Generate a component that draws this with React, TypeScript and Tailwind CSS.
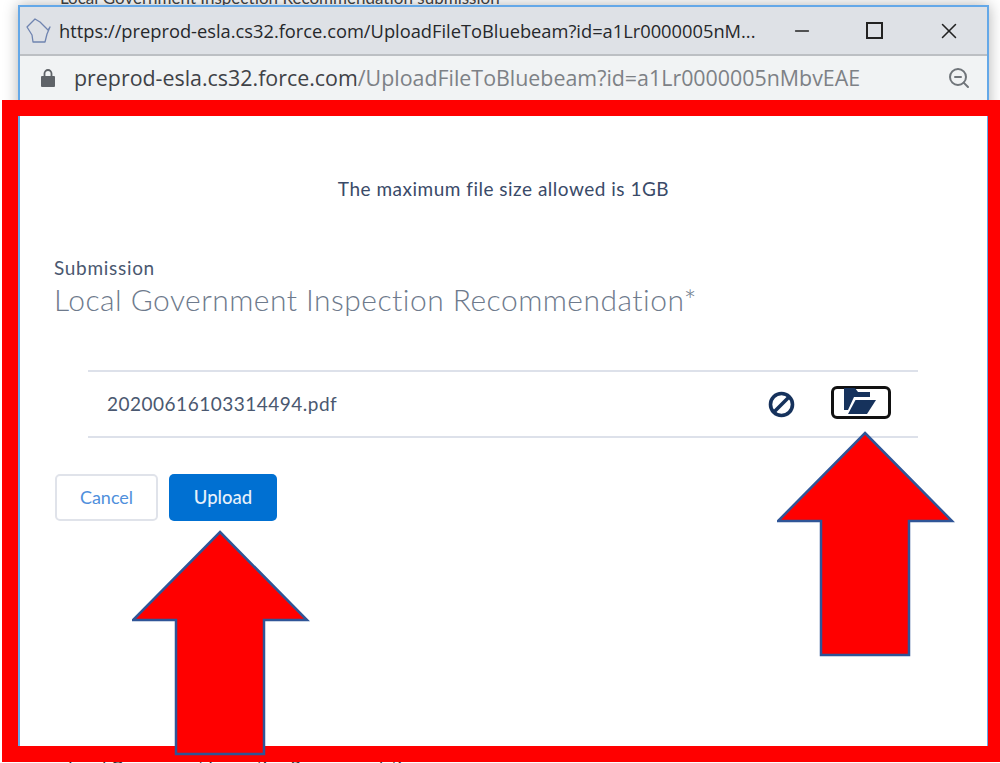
import { Minus, X, ZoomOut } from "lucide-react";

const sans = "font-['Lato','Open_Sans',sans-serif]";

function StateOutline() {
  return (
    <svg width="25" height="27" viewBox="0 0 25 27" fill="none" stroke="#6f84b0" strokeWidth="1.3" strokeLinejoin="round">
      <path d="M1 10 L9 2 L14 5 L17 8 L22 13 L24 10 L21 17 L19 25 L7 25 L6 18 Z" />
    </svg>
  );
}

function Lock() {
  return (
    <svg width="14" height="18" viewBox="0 0 14 18" fill="#5f6368">
      <path d="M1 7h12a1 1 0 0 1 1 1v9a1 1 0 0 1-1 1H1a1 1 0 0 1-1-1V8a1 1 0 0 1 1-1Z" />
      <path d="M3.5 7V4.5a3.5 3.5 0 0 1 7 0V7" fill="none" stroke="#5f6368" strokeWidth="1.8" />
    </svg>
  );
}

function BanIcon() {
  return (
    <svg width="27" height="27" viewBox="0 0 27 27" fill="none" stroke="#16325c" strokeWidth="3.6">
      <circle cx="13.5" cy="13.5" r="11" />
      <path d="M6 21 L21 6" />
    </svg>
  );
}

function FolderButton() {
  return (
    <button className="relative h-[33px] w-[60px] rounded-[6px] border-[3px] border-[#111] bg-white">
      <svg className="absolute left-[9px] top-[-3px]" width="34" height="30" viewBox="0 0 34 30" fill="#16325c">
        <path d="M1 2 H12 L15 6 H27 V11 H11 L5 24 H1 Z" />
        <path d="M12.5 14 H33 L24 28 H5 Z" />
      </svg>
    </button>
  );
}

function Arrow({ className }: { className: string }) {
  return (
    <svg className={`absolute ${className}`} width="180" height="226" viewBox="0 0 180 226">
      <path d="M88 2 L175 90 L132 90 L132 224 L44 224 L44 90 L1 90 Z" fill="#ff0000" stroke="#2f5597" strokeWidth="2.5" />
    </svg>
  );
}

export default function App() {
  return (
    <div className={`relative h-[763px] w-[1000px] overflow-hidden bg-white ${sans}`}>
      {/* page text showing round the popup */}
      <p className="absolute left-[60px] top-[-15px] text-[17px] text-[#444]">Local Government Inspection Recommendation submission</p>
      <p className="absolute left-[68px] top-[755px] text-[17px] text-[#333]">Local Government Inspection Recommendation</p>

      <div className="absolute left-[18px] top-[5px] h-[745px] w-[971px] border-2 border-[#64a8e8] bg-white shadow-[0_0_14px_rgba(0,0,0,0.3)]">
        <div className="flex h-[49px] items-center border-b-2 border-[#bcbfc3] bg-[#dee1e6] pl-[6px] font-['Open_Sans',sans-serif]">
          <StateOutline />
          <span className="ml-[8px] w-[700px] truncate text-[18.3px] text-[#26282b]">
            https://preprod-esla.cs32.force.com/UploadFileToBluebeam?id=a1Lr0000005nM...
          </span>
          <Minus className="ml-[32px] text-[#222]" size={22} strokeWidth={1.5} />
          <div className="ml-[53px] h-[17px] w-[17px] border-2 border-[#222]" />
          <X className="ml-[53px] text-[#222]" size={26} strokeWidth={1.4} />
        </div>
        <div className="flex h-[44px] items-center bg-[#f1f3f4] pl-[21px] font-['Open_Sans',sans-serif] text-[21.4px]">
          <Lock />
          <span className="ml-[19px] text-[#3f4247]">preprod-esla.cs32.force.com</span>
          <span className="text-[#7d8186]">/UploadFileToBluebeam?id=a1Lr0000005nMbvEAE</span>
          <ZoomOut className="ml-auto mr-[16px] text-[#70757a]" size={24} strokeWidth={2} />
        </div>

        <div className="flex flex-col pt-[75px]">
          <p className="text-center text-[19px] leading-[28px] tracking-[0.5px] text-[#3a4a68]">The maximum file size allowed is 1GB</p>
          <div className="mt-[53px] pl-[34px] text-[#54698d]">
            <p className="text-[19px] leading-[24px] tracking-[0.7px] text-[#4a5870]">Submission</p>
            <h2 className="mt-[1px] text-[30px] leading-[36px] font-light tracking-[0.47px] text-[#6e7a8c]">Local Government Inspection Recommendation*</h2>
          </div>
          <div className="ml-[68px] mr-[69px] mt-[53px] flex h-[68px] items-center border-y-2 border-[#dde1ea] pl-[19px] pr-[27px]">
            <span className="flex-1 text-[19px] tracking-[0.5px] text-[#4a5870]">20200616103314494.pdf</span>
            <BanIcon />
            <div className="ml-[36px]">
              <FolderButton />
            </div>
          </div>
          <div className="ml-[35px] mt-[36px] flex gap-[11px]">
            <button className="h-[47px] w-[103px] rounded-[5px] border-2 border-[#e0e3ea] bg-white text-[18px] text-[#4f8fdc]">Cancel</button>
            <button className="h-[47px] w-[108px] rounded-[5px] bg-[#0070d2] text-[18.5px] font-medium text-[#e6f0fa]">Upload</button>
          </div>
        </div>
      </div>

      {/* annotation frame and arrows */}
      <div className="pointer-events-none absolute left-[2px] top-[100px] h-[662px] w-[998px] border-y-[16px] border-l-[16px] border-r-[12px] border-[#ff0000]" />
      <Arrow className="left-[132px] top-[530px]" />
      <Arrow className="left-[777px] top-[431px]" />
    </div>
  );
}
